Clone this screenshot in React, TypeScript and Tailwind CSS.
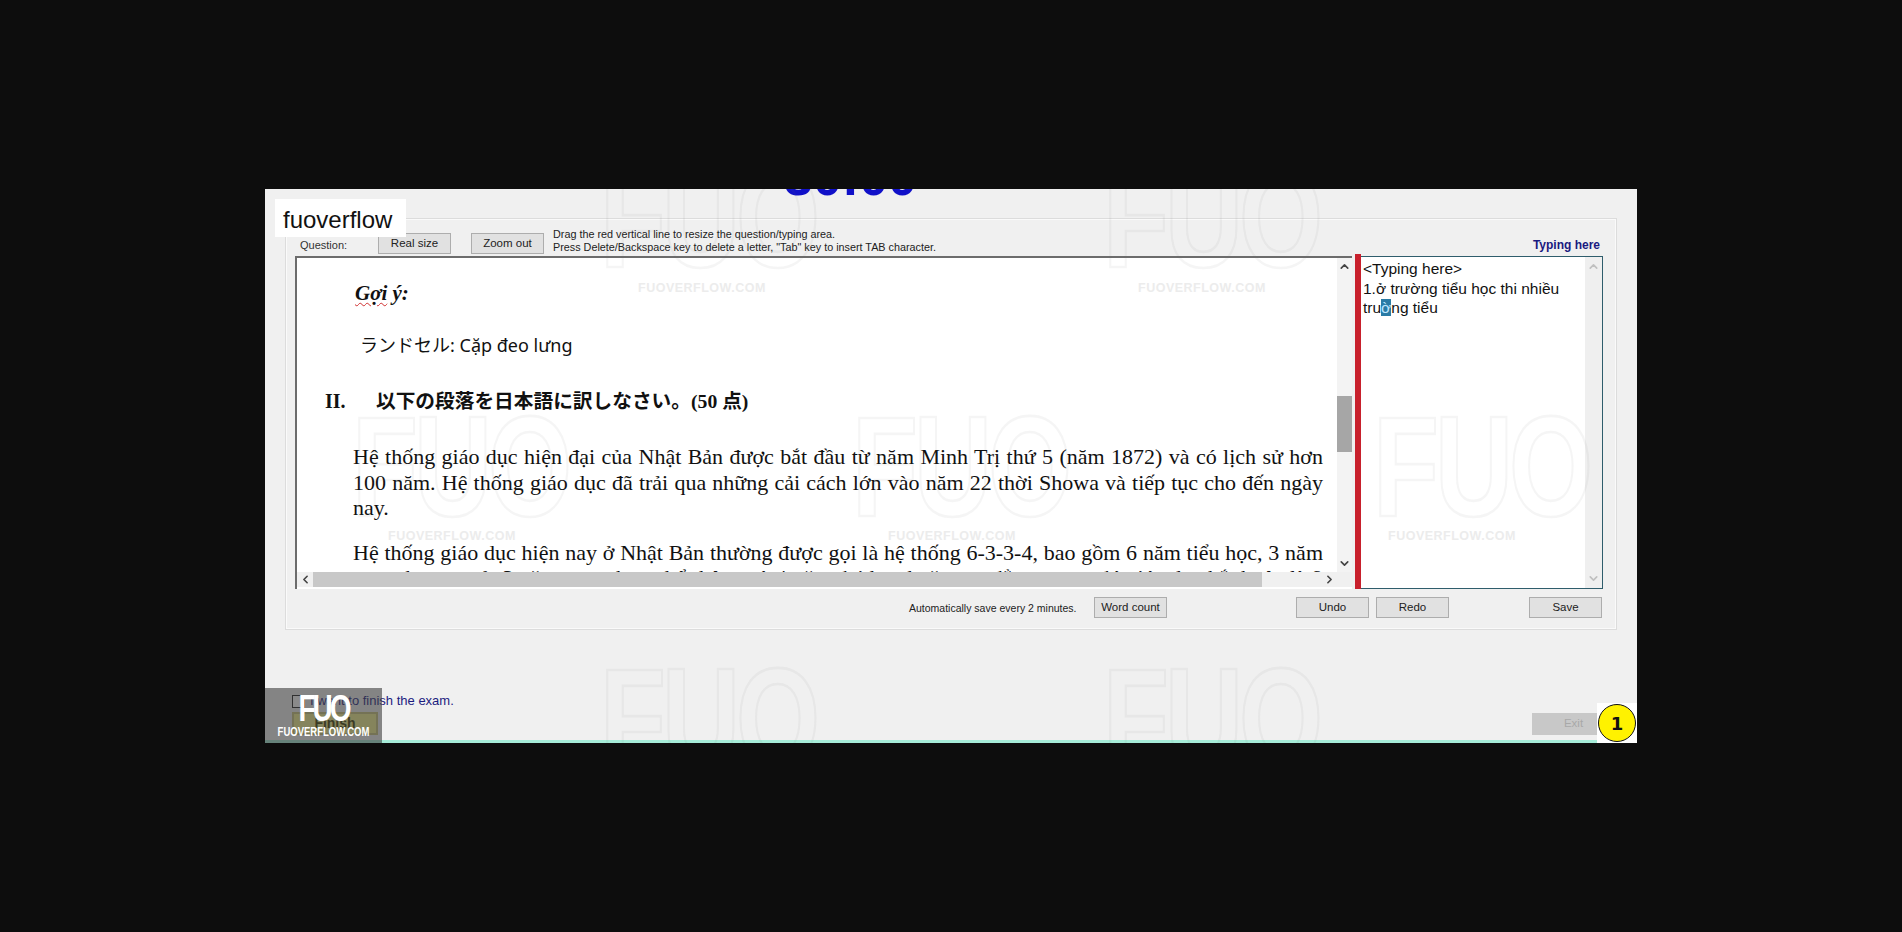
import { ChevronDown, ChevronLeft, ChevronRight, ChevronUp } from "lucide-react";

const sans = "font-['Liberation_Sans',Arial,sans-serif]";

const bigMarks = [
  "left-[335px] top-[-43px]",
  "left-[838px] top-[-43px]",
  "left-[87px] top-[206px]",
  "left-[587px] top-[206px]",
  "left-[1108px] top-[206px]",
  "left-[335px] top-[458px]",
  "left-[838px] top-[458px]",
];

const smallMarks = [
  "left-[373px] top-[92px]",
  "left-[873px] top-[92px]",
  "left-[123px] top-[340px]",
  "left-[623px] top-[340px]",
  "left-[1123px] top-[340px]",
];

const WinButton = ({ label, className = "" }: { label: string; className?: string }) => (
  <button
    className={`${sans} w-[73px] h-[21px] shrink-0 bg-[#e1e1e1] border border-[#adadad] text-[11.5px] leading-[17px] text-[#222] ${className}`}
  >
    {label}
  </button>
);

const QuestionPane = () => (
  <div className="w-[1057px] h-full flex flex-col border-l-2 border-t-2 border-[#6c6c6c] bg-white">
    <div className="flex h-[314px]">
      <div className="flex-1 min-w-0 overflow-hidden pl-[56px] pr-[14px] font-['Liberation_Serif','Noto_Sans_CJK_JP',serif] text-[#111]">
        <p className="mt-[23px] ml-[2px] text-[21px] leading-[24px] font-bold italic">
          <span className="underline decoration-wavy decoration-[#d03030] decoration-1 underline-offset-2">Gợi</span> ý:
        </p>
        <p className="mt-[28px] ml-[7px] font-['Noto_Sans','Noto_Sans_CJK_JP',sans-serif] text-[18px] leading-[24px]">
          ランドセル: Cặp đeo lưng
        </p>
        <p className="mt-[32px] -ml-[28px] flex text-[20px] leading-[24px] font-bold">
          <span className="w-[51px]">II.</span>
          <span className="text-[19.7px]">以下の段落を日本語に訳しなさい。(50 点)</span>
        </p>
        <p className="mt-[31px] text-[22px] leading-[25.5px] text-justify">
          Hệ thống giáo dục hiện đại của Nhật Bản được bắt đầu từ năm Minh Trị thứ 5 (năm 1872) và có lịch sử hơn 100 năm.
          Hệ thống giáo dục đã trải qua những cải cách lớn vào năm 22 thời Showa và tiếp tục cho đến ngày nay.
        </p>
        <p className="mt-[19px] text-[22px] leading-[25.5px] text-justify">
          Hệ thống giáo dục hiện nay ở Nhật Bản thường được gọi là hệ thống 6-3-3-4, bao gồm 6 năm tiểu học, 3 năm trung học
          cơ sở, 3 năm trung học phổ thông và 4 năm đại học hoặc cao đẳng, trong đó giáo dục bắt buộc là 9 năm.
        </p>
      </div>
      <div className="w-[15px] flex flex-col items-center py-[2px] bg-[#f3f3f3] text-[#444]">
        <ChevronUp size={13} strokeWidth={3} />
        <div className="w-full h-[56px] mt-[123px] bg-[#a6a6a6]" />
        <ChevronDown size={13} strokeWidth={3} className="mt-auto" />
      </div>
    </div>
    <div className="h-[15px] flex items-center bg-[#f0f0f0] text-[#444]">
      <div className="w-[16px] flex justify-center"><ChevronLeft size={13} strokeWidth={3} /></div>
      <div className="w-[949px] h-full bg-[#c8c8c8]" />
      <div className="flex-1 flex justify-end pr-[16px]"><ChevronRight size={13} strokeWidth={3} /></div>
    </div>
  </div>
);

const TypingPane = () => (
  <div className="w-[242px] h-full flex border-t border-r border-b border-[#2f5d6c] bg-white">
    <div className={`${sans} flex-1 pl-[2px] pt-[2px] text-[15.5px] leading-[19.6px] text-[#111]`}>
      <p>&lt;Typing here&gt;</p>
      <p>1.ở trường tiểu học thi nhiều</p>
      <p>
        tru<span className="bg-[#2a7ba5] text-[#bfe6ff]">ờ</span>ng tiểu
      </p>
    </div>
    <div className="w-[17px] flex flex-col items-center justify-between py-[3px] bg-[#efefef] text-[#c0c0c0]">
      <ChevronUp size={13} strokeWidth={3} />
      <ChevronDown size={13} strokeWidth={3} />
    </div>
  </div>
);

export default function App() {
  return (
    <div className="w-[1902px] h-[932px] bg-[#0d0d0d] pt-[189px] pl-[265px] overflow-hidden">
      <div className="relative w-[1372px] h-[554px] bg-[#f0f0f0] overflow-hidden flex flex-col">
        <div className="h-[29px] shrink-0 pl-[519px]">
          <div className={`${sans} -mt-[37px] text-[52px] leading-[50px] font-bold text-[#1010c8]`}>30:00</div>
        </div>

        <div className="ml-[20px] w-[1332px] h-[412px] shrink-0 border border-[#dcdcdc] shadow-[inset_0_0_0_1px_#fafafa]">
          <div className="h-[37px] flex items-start pt-[14px] pl-[14px] pr-[16px]">
            <span className={`${sans} w-[78px] pt-[5px] text-[11px] leading-[14px] text-[#333]`}>Question:</span>
            <WinButton label="Real size" />
            <WinButton label="Zoom out" className="ml-[20px]" />
            <div className={`${sans} ml-[9px] -mt-[5px] flex-1 text-[10.8px] leading-[13px] text-[#222]`}>
              <p>Drag the red vertical line to resize the question/typing area.</p>
              <p>Press Delete/Backspace key to delete a letter, "Tab" key to insert TAB character.</p>
            </div>
            <span className={`${sans} pt-[5px] text-[12px] leading-[14px] font-bold text-[#1a1a80]`}>Typing here</span>
          </div>

          <div className="ml-[9px] flex h-[333px]">
            <QuestionPane />
            <div className="ml-[3px] -mt-[2px] w-[6px] h-[335px] bg-[#c8202c]" />
            <TypingPane />
          </div>

          <div className="mt-[8px] flex items-center pl-[623px]">
            <span className={`${sans} w-[185px] text-[10.5px] leading-[14px] text-[#222]`}>Automatically save every 2 minutes.</span>
            <WinButton label="Word count" />
            <WinButton label="Undo" className="ml-[129px]" />
            <WinButton label="Redo" className="ml-[7px]" />
            <WinButton label="Save" className="ml-[80px]" />
          </div>
        </div>

        <div className="flex-1 flex flex-col justify-end">
          <div className="flex items-end justify-between pl-[27px] pr-[40px] pb-[5px]">
            <div className="flex flex-col">
              <label className={`${sans} flex items-center gap-[5px] text-[13px] leading-[14px] text-[#1c1c80]`}>
                <span className="w-[13px] h-[13px] border border-[#222] bg-white" />
                I want to finish the exam.
              </label>
              <button className={`${sans} mt-[4px] w-[86px] h-[23px] bg-[#f2ef8c] border-2 border-[#c8c47a] text-[14px] leading-[17px] font-bold text-[#3a3a00]`}>
                Finish
              </button>
            </div>
            <button className={`${sans} w-[65px] h-[22px] pl-[18px] bg-[#c8c8c8] text-[11.5px] text-[#a8a8a8]`}>Exit</button>
          </div>
          <div className="h-[3px] shrink-0 bg-[#a6ecd8]" />
        </div>

        {/* watermarks sit on top of everything */}
        {bigMarks.map((pos) => (
          <span
            key={pos}
            className={`absolute pointer-events-none origin-top scale-y-[1.33] ${pos} ${sans} text-[108px] leading-[108px] font-bold tracking-[-4px] text-transparent [-webkit-text-stroke:2px_rgba(120,120,120,0.07)]`}
          >
            FUO
          </span>
        ))}
        {smallMarks.map((pos) => (
          <span
            key={pos}
            className={`absolute pointer-events-none ${pos} ${sans} text-[12.5px] leading-[14px] font-bold tracking-[0.5px] text-[#ececec]`}
          >
            FUOVERFLOW.COM
          </span>
        ))}

        <div className={`absolute left-[10px] top-[10px] w-[131px] h-[38px] bg-white pl-[8px] pt-[2px] ${sans} text-[24px] leading-[38px] text-[#111]`}>
          fuoverflow
        </div>

        <div className="absolute left-0 bottom-0 w-[117px] h-[55px] bg-[rgba(60,60,60,0.6)] flex flex-col items-center text-white">
          <span className={`${sans} text-[28px] leading-[28px] font-bold tracking-[-3px] mt-[7px] scale-y-[1.3]`}>FUO</span>
          <span className={`${sans} mt-[3px] text-[9.5px] leading-[12px] font-bold scale-y-[1.25]`}>FUOVERFLOW.COM</span>
        </div>

        <div className="absolute right-0 bottom-0 w-[40px] h-[40px] bg-white flex items-center justify-center">
          <span className="w-[38px] h-[38px] rounded-full bg-[#fff200] border border-[#111] flex items-center justify-center font-['DejaVu_Sans',sans-serif] text-[18px] font-bold text-[#111]">
            1
          </span>
        </div>
      </div>
    </div>
  );
}
